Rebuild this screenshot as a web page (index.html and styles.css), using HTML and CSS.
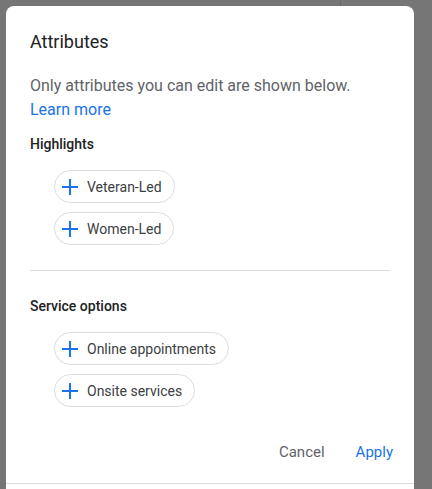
FILE: index.html
```html
<!DOCTYPE html>
<html>
<head>
<meta charset="utf-8">
<link rel="stylesheet" href="styles.css">
</head>
<body>
<div class="backdrop">
  <div class="dialog">
    <h1 class="title">Attributes</h1>
    <p class="intro">Only attributes you can edit are shown below.<br><a class="link" href="#">Learn more</a></p>

    <section class="section">
      <h2 class="section-title">Highlights</h2>
      <div class="chips">
        <button class="chip"><svg class="plus" viewBox="0 0 16 16"><path d="M8 0v16M0 8h16"/></svg><span>Veteran-Led</span></button>
        <button class="chip"><svg class="plus" viewBox="0 0 16 16"><path d="M8 0v16M0 8h16"/></svg><span>Women-Led</span></button>
      </div>
    </section>

    <hr class="divider">

    <section class="section">
      <h2 class="section-title">Service options</h2>
      <div class="chips">
        <button class="chip"><svg class="plus" viewBox="0 0 16 16"><path d="M8 0v16M0 8h16"/></svg><span>Online appointments</span></button>
        <button class="chip"><svg class="plus" viewBox="0 0 16 16"><path d="M8 0v16M0 8h16"/></svg><span>Onsite services</span></button>
      </div>
    </section>

    <div class="actions">
      <button class="btn btn-cancel">Cancel</button>
      <button class="btn btn-apply">Apply</button>
    </div>
    <div class="footer-line"></div>
  </div>
</div>
</body>
</html>
```

FILE: styles.css
```css
html, body {
  margin: 0;
  padding: 0;
  height: 100%;
  overflow: hidden;
}
body {
  background: #767676 linear-gradient(to right, transparent 340px, #686868 340px, #686868 341px, transparent 341px) no-repeat;
  background-size: 100% 6px;
  background-color: #767676;
  font-family: Roboto, "Liberation Sans", Arial, sans-serif;
}
.backdrop {
  padding: 6px 0 0 6px;
}
.dialog {
  width: 408px;
  height: 500px;
  box-sizing: border-box;
  background: #fff;
  border-radius: 8px 8px 0 0;
  padding: 24px 0 0 0;
}
.title {
  margin: 0 24px;
  font-size: 18px;
  line-height: 24px;
  font-weight: 400;
  color: #202124;
}
.intro {
  margin: 20px 24px 0;
  font-size: 16px;
  line-height: 24px;
  color: #5f6368;
}
.link {
  color: #1a73e8;
  text-decoration: none;
}
.section {
  margin: 0 24px;
}
.intro + .section {
  margin-top: 12px;
}
.section-title {
  margin: 0;
  font-size: 14px;
  line-height: 20px;
  font-weight: 500;
  color: #202124;
}
.chips {
  display: flex;
  flex-direction: column;
  align-items: flex-start;
  gap: 10px;
  margin: 16px 0 0 24px;
}
.chip {
  display: flex;
  align-items: center;
  height: 33px;
  box-sizing: border-box;
  border: 1px solid #dadce0;
  border-radius: 17px;
  background: #fff;
  padding: 0 12px 0 7px;
  font-family: Roboto, "Liberation Sans", Arial, sans-serif;
  font-size: 14px;
  color: #3c4043;
  cursor: pointer;
}
.chips .chip + .chip {
  margin-top: -1px;
}
.plus {
  width: 16px;
  height: 16px;
  margin-right: 9px;
  flex: none;
}
.plus path {
  stroke: #1a73e8;
  stroke-width: 2;
  fill: none;
}
.divider {
  margin: 25px 24px 25px;
  border: 0;
  border-top: 1px solid #dadce0;
  height: 0;
}
.actions {
  display: flex;
  justify-content: flex-end;
  gap: 15px;
  margin: 27px 13px 0 0;
}
.btn {
  height: 36px;
  line-height: 36px;
  padding: 0 8px;
  border: 0;
  background: transparent;
  font-family: Roboto, "Liberation Sans", Arial, sans-serif;
  font-size: 15px;
  cursor: pointer;
}
.btn-cancel {
  color: #5f6368;
}
.btn-apply {
  color: #1a73e8;
}
.footer-line {
  margin-top: 13px;
  border-top: 1px solid #dadce0;
}
```
